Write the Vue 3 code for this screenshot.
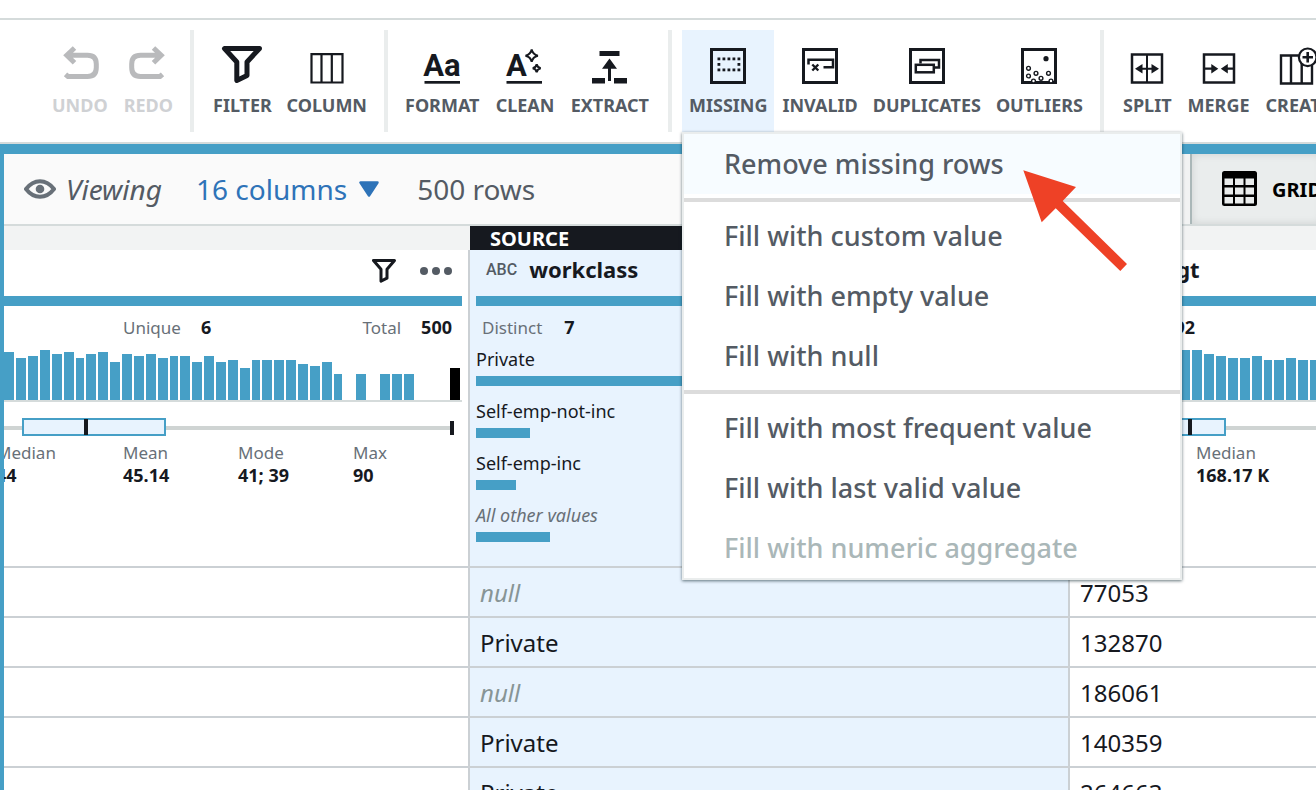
<script setup>
const frame = '<rect x="3.5" y="3.5" width="33" height="33" fill="none" stroke="#16191f" stroke-width="3"/>'
const smallFrame = '<rect x="5" y="8.5" width="30" height="28" fill="none" stroke="#16191f" stroke-width="2.5"/>'
const letter = 'font-family="Roboto, Liberation Sans, sans-serif" font-weight="700" fill="#16191f"'
const undoPath = 'M15.5 2 7.8 9.2 15.5 16.800M9 9.2H28.500Q37.300 9.200 37.300 18V21.500Q37.300 30.500 28.500 30.500H9L6.500 28.300'

const dots = [
  [11, 13], [16, 13], [21, 13], [26, 13], [31, 13],
  [11, 18.5], [31, 18.5],
  [11, 24], [16, 24], [21, 24], [26, 24], [31, 24]
].map(([x, y]) => `<rect x="${x - 1.5}" y="${y - 1.5}" width="2.8" height="2.8"/>`).join('')

const rings = [
  [9.5, 22.3], [9.5, 30], [17, 27.3], [29.5, 27.3], [22, 32.3], [14.500, 35], [32, 35]
].map(([x, y]) => `<circle cx="${x}" cy="${y}" r="1.9" fill="#fff" stroke="#16191f" stroke-width="1.400"/>`).join('')

const groups = [
  {
    name: 'history',
    tools: [
      { label: 'UNDO', disabled: true, icon: `<path d="${undoPath}" transform="translate(-1)" fill="none" stroke="#b9babc" stroke-width="5"/>` },
      { label: 'REDO', disabled: true, icon: `<path d="${undoPath}" transform="matrix(-1 0 0 1 41 0)" fill="none" stroke="#b9babc" stroke-width="5"/>` }
    ]
  },
  {
    name: 'view',
    tools: [
      { label: 'FILTER', icon: '<path d="M2.500 2.500H37.500L25 16V29.500L14.800 34.500V16Z" fill="none" stroke="#16191f" stroke-width="5" stroke-linejoin="round"/>' },
      { label: 'COLUMN', icon: '<path d="M4.500 8.200H35.500V36.500H4.500ZM14.500 8V36M24.800 8V36" fill="none" stroke="#16191f" stroke-width="2.200"/>' }
    ]
  },
  {
    name: 'text',
    tools: [
      { label: 'FORMAT', icon: `<text x="20" y="30" font-size="31" text-anchor="middle" ${letter}>Aa</text><rect x="2.500" y="35" width="35.500" height="2.700"/>` },
      { label: 'CLEAN', icon: `<text x="1" y="30" font-size="31" ${letter}>A</text><rect x="1.500" y="35" width="35.500" height="2.700"/><path d="M27.700 3.500Q28.800 8.600 33.900 9.700 28.800 10.800 27.700 15.900 26.600 10.800 21.500 9.700 26.600 8.600 27.700 3.500ZM32.700 18.300Q33.400 21.600 36.700 22.300 33.400 23 32.700 26.300 32 23 28.700 22.300 32 21.600 32.700 18.300Z" transform="translate(-1)" fill="#fff" stroke="#16191f" stroke-width="2"/>` },
      { label: 'EXTRACT', icon: '<path d="M9.500 5H29.500V10H9.500ZM19.500 12.500 27 22.700H21V35H18V22.700H12ZM2 32H15V37.500H2ZM24 32H37V37.500H24Z"/>' }
    ]
  },
  {
    name: 'quality',
    tools: [
      { label: 'MISSING', active: true, icon: frame + dots },
      { label: 'INVALID', icon: frame + '<path d="M8.500 18.500V13.700H33V21.300H23.500" fill="none" stroke="#16191f" stroke-width="2.500"/><path d="M12.300 18.500 18.300 24.500M18.300 18.500 12.300 24.500" stroke="#16191f" stroke-width="2.400"/>' },
      { label: 'DUPLICATES', icon: frame + '<path d="M13.500 17.500V14H32V21.500H28" fill="none" stroke="#16191f" stroke-width="2.500"/><rect x="8.800" y="18.800" width="18" height="7.500" fill="none" stroke="#16191f" stroke-width="2.500"/>' },
      { label: 'OUTLIERS', icon: frame + '<circle cx="27" cy="12.700" r="2.600"/>' + rings }
    ]
  },
  {
    name: 'structure',
    tools: [
      { label: 'SPLIT', icon: smallFrame + '<path d="M20 8V36M12 22.700H28" stroke="#16191f" stroke-width="2"/><path d="M8 22.700 15.500 18V27.400ZM32 22.700 24.500 18V27.400Z"/>' },
      { label: 'MERGE', icon: smallFrame + '<path d="M6 22.700H13M27 22.700H34" stroke="#16191f" stroke-width="2.200"/><path d="M19.300 22.700 12.300 18V27.400ZM21.800 22.700 28.800 18V27.400Z"/>' },
      { label: 'CREATE', icon: '<g transform="translate(5)"><path d="M-2 9.500H29V37.500H-2ZM8 9.500V37.500M18.700 9.500V37.500" fill="none" stroke="#16191f" stroke-width="2.400"/><circle cx="24.700" cy="11.300" r="8.800" fill="#fff" stroke="#16191f" stroke-width="2.200"/><path d="M19.500 11.300H30M24.700 6V16.600" stroke="#16191f" stroke-width="2.600"/></g>' }
    ]
  }
]

const menu = [
  [{ label: 'Remove missing rows', hover: true }],
  [{ label: 'Fill with custom value' }, { label: 'Fill with empty value' }, { label: 'Fill with null' }],
  [{ label: 'Fill with most frequent value' }, { label: 'Fill with last valid value' }, { label: 'Fill with numeric aggregate', disabled: true }]
]

// Histogram bars as [x, width, height]
const ageBars = [
  [0, 10, 48], [12, 10, 42], [24, 10, 44], [36, 10, 50], [48, 10, 46], [60, 10, 48], [72, 8, 42], [82, 10, 46],
  [94, 10, 48], [106, 10, 38], [118, 10, 46], [130, 10, 44], [142, 10, 46], [154, 10, 42], [166, 8, 44], [176, 10, 44],
  [188, 10, 38], [200, 10, 44], [212, 10, 38], [224, 10, 40], [236, 10, 32], [248, 8, 40], [258, 10, 40], [270, 10, 40],
  [282, 10, 40], [294, 10, 36], [306, 10, 34], [318, 10, 38], [330, 8, 26], [352, 10, 26], [376, 10, 26], [388, 10, 26], [400, 10, 26]
]
const weightBars = [
  [100, 10, 50], [112, 10, 50], [124, 8, 50], [134, 10, 50], [146, 10, 46], [158, 10, 44], [170, 10, 42], [182, 10, 42],
  [194, 10, 44], [206, 8, 40], [216, 10, 40], [228, 10, 42], [240, 10, 40], [252, 10, 40]
]

const ageStats = [
  { label: 'Median', value: '44' },
  { label: 'Mean', value: '45.14' },
  { label: 'Mode', value: '41; 39' },
  { label: 'Max', value: '90' }
]

const shares = [
  { label: 'Private', width: 586 },
  { label: 'Self-emp-not-inc', width: 54 },
  { label: 'Self-emp-inc', width: 40 },
  { label: 'All other values', width: 74, other: true }
]

const rows = [
  { workclass: null, weight: '77053' },
  { workclass: 'Private', weight: '132870' },
  { workclass: null, weight: '186061' },
  { workclass: 'Private', weight: '140359' },
  { workclass: 'Private', weight: '264663' }
]
</script>

<template>
  <div class="page">
    <nav class="toolbar" aria-label="Transformations">
      <div v-for="group in groups" :key="group.name" class="group" :class="group.name">
        <div v-for="tool in group.tools" :key="tool.label" class="slot">
          <button type="button" class="tool" :class="{ active: tool.active }" :disabled="tool.disabled">
            <svg class="tool-icon" viewBox="0 0 40 40" fill="#16191f" aria-hidden="true"><g v-html="tool.icon"></g></svg>
            <span>{{ tool.label }}</span>
          </button>
          <div v-if="tool.active" class="menu">
            <div v-for="(section, i) in menu" :key="i" class="section">
              <button
                v-for="item in section"
                :key="item.label"
                type="button"
                class="item"
                :class="{ hover: item.hover }"
                :disabled="item.disabled"
              >{{ item.label }}</button>
            </div>
            <svg class="pointer" viewBox="0 0 106 102" aria-hidden="true">
              <path d="M1.300 .300 54 17 40.700 31 105 94 98.300 101 33.700 38.300 19.700 52.300Z" fill="#ee4126" />
            </svg>
          </div>
        </div>
      </div>
    </nav>

    <main class="workspace">
      <div class="viewbar">
        <svg class="eye" viewBox="0 0 32 20" aria-hidden="true">
          <path d="M2 10Q8 2.200 16 2.200T30 10Q24 17.800 16 17.800T2 10Z" fill="none" stroke="#687078" stroke-width="4" stroke-linejoin="round" />
          <circle cx="16" cy="10" r="4.300" fill="#687078" />
        </svg>
        <em class="viewing">Viewing</em>
        <button type="button" class="columns">
          16 columns
          <svg class="caret" viewBox="0 0 20 16" aria-hidden="true"><path d="M1.500 1.500H18.500L10 14.500Z" fill="#2e73b8" stroke="#2e73b8" stroke-width="2.500" stroke-linejoin="round" /></svg>
        </button>
        <span class="count">500 rows</span>
        <div class="tabs">
          <button type="button" class="tab">
            <svg class="grid-icon" viewBox="0 0 36 36" aria-hidden="true">
              <rect width="35" height="35" rx="2.500" />
              <path d="M2.500 7.500H11V14H2.500ZM13 7.500H21.500V14H13ZM23.500 7.500H32V14H23.500ZM2.500 16.500H11V23.500H2.500ZM13 16.500H21.500V23.500H13ZM23.500 16.500H32V23.500H23.500ZM2.500 26H11V32.500H2.500ZM13 26H21.500V32.500H13ZM23.500 26H32V32.500H23.500Z" fill="#eaeded" />
            </svg>
            GRID
          </button>
        </div>
      </div>

      <table class="data">
        <colgroup>
          <col class="col-age">
          <col class="col-class">
          <col>
        </colgroup>
        <thead>
          <tr class="strip">
            <td></td>
            <td class="source">SOURCE</td>
            <td></td>
          </tr>
          <tr class="profiles">
            <th scope="col" class="age">
              <div class="title actions">
                <svg class="funnel" viewBox="0 0 40 40" aria-hidden="true"><path d="M2.500 2.500H37.500L25 17V32L15 37V17Z" fill="none" stroke="#16191f" stroke-width="5" stroke-linejoin="round" /></svg>
                <svg class="more" viewBox="0 0 32 8" fill="#545b64" aria-hidden="true"><circle cx="4" cy="4" r="4" /><circle cx="16" cy="4" r="4" /><circle cx="28" cy="4" r="4" /></svg>
              </div>
              <div class="quality-bar"></div>
              <div class="summary">
                <span>Unique</span><b>6</b>
                <span class="total">Total</span><b>500</b>
              </div>
              <svg class="chart" width="464" height="90" aria-hidden="true">
                <rect v-for="b in ageBars" :key="b[0]" :x="b[0]" :y="50 - b[2]" :width="b[1]" :height="b[2]" fill="#469fc6" />
                <rect x="446" y="18" width="10" height="32" />
                <rect y="50" width="458" height="2" fill="#d5dbdb" />
                <rect y="76" width="446" height="4" fill="#cfd4d3" />
                <rect x="19" y="69" width="142" height="16" fill="#e8f3fe" stroke="#469fc6" stroke-width="2" />
                <rect x="80" y="69" width="4" height="16" fill="#16191f" />
                <rect x="446" y="71" width="4" height="14" fill="#16191f" />
              </svg>
              <dl class="stats">
                <div v-for="s in ageStats" :key="s.label"><dt>{{ s.label }}</dt><dd>{{ s.value }}</dd></div>
              </dl>
            </th>
            <th scope="col" class="class">
              <div class="title"><span class="type">ABC</span>workclass</div>
              <div class="quality-bar"></div>
              <div class="summary"><span>Distinct</span><b>7</b></div>
              <div class="shares">
                <div v-for="s in shares" :key="s.label" class="share" :class="{ other: s.other }">
                  {{ s.label }}
                  <div class="share-bar" :style="{ width: s.width + 'px' }"></div>
                </div>
              </div>
            </th>
            <th scope="col" class="weight">
              <div class="title"><span class="type">#</span>fnlwgt</div>
              <div class="quality-bar"></div>
              <div class="summary"><span>Distinct</span><b>492</b></div>
              <svg class="chart" height="90" aria-hidden="true">
                <rect v-for="b in weightBars" :key="b[0]" :x="b[0] - 12" :y="50 - b[2]" :width="b[1]" :height="b[2]" fill="#469fc6" />
                <rect y="50" width="100%" height="2" fill="#d5dbdb" />
                <rect y="76" width="100%" height="4" fill="#cfd4d3" />
                <rect x="51" y="69" width="104" height="16" fill="#e8f3fe" stroke="#469fc6" stroke-width="2" />
                <rect x="118" y="69" width="4" height="16" fill="#16191f" />
              </svg>
              <dl class="stats"><div><dt>Median</dt><dd>168.17 K</dd></div></dl>
            </th>
          </tr>
        </thead>
        <tbody>
          <tr v-for="(row, i) in rows" :key="i">
            <td></td>
            <td class="class"><i v-if="row.workclass === null">null</i><template v-else>{{ row.workclass }}</template></td>
            <td>{{ row.weight }}</td>
          </tr>
        </tbody>
      </table>
    </main>
  </div>
</template>

<style>
body { margin: 0; }
</style>

<style scoped>
* { box-sizing: border-box; }

.page {
  display: flex;
  flex-direction: column;
  height: 100vh;
  overflow: hidden;
  padding-top: 18px;
  background: #fff;
  color: #16191f;
  font-family: "Noto Sans", "Open Sans", sans-serif;
}

button {
  margin: 0;
  padding: 0;
  border: 0;
  background: none;
  font: inherit;
  color: inherit;
}

svg { display: block; flex: none; }

.toolbar {
  display: flex;
  flex: none;
  padding: 10px 0;
  border-top: 2px solid #d5dbdb;
  border-bottom: 2px solid #d5dbdb;
}

.group {
  display: flex;
  flex: none;
  justify-content: space-between;
  height: 102px;
  padding: 0 10px;
  border-right: 4px solid #eaeded;
}
.group.history { width: 194px; padding-left: 45px; }
.group.view { width: 194px; padding-left: 12px; }
.group.text { width: 284px; padding-right: 12px; }
.group.quality { width: 432px; }
.group.structure { gap: 2px; padding-left: 12px; border-right: 0; }

.slot { position: relative; }

.tool {
  display: flex;
  flex-direction: column;
  align-items: center;
  gap: 7px;
  height: 102px;
  padding: 16px 7px 0;
  font-size: 18px;
  font-weight: 700;
  line-height: 24px;
  color: #545b64;
}
.tool:disabled { color: #cfd1d4; }
.tool.active { background: #e8f3fe; }

.tool-icon { width: 40px; height: 40px; overflow: visible; }

.menu {
  position: absolute;
  z-index: 2;
  top: 100%;
  left: 0;
  width: 500px;
  border: 2px solid #eaeded;
  background: #fff;
  box-shadow: 0 1px 3px rgba(0, 28, 36, 0.6);
}

.section + .section {
  margin-top: 4px;
  padding-top: 4px;
  border-top: 4px solid #dcdcdc;
}

.item {
  display: block;
  width: 100%;
  height: 60px;
  padding: 0 40px 2px;
  font-size: 27px;
  font-weight: 500;
  text-align: left;
  color: #545b64;
}
.item.hover { background: #f7fcff; }
.item:disabled { color: #aab7b8; }

.pointer {
  position: absolute;
  top: 36px;
  left: 338px;
  width: 106px;
  height: 102px;
}

.workspace {
  flex: 1;
  min-height: 0;
  overflow: hidden;
  border-top: 10px solid #469fc6;
  border-left: 4px solid #469fc6;
}

.viewbar {
  display: flex;
  align-items: center;
  height: 72px;
  padding-left: 20px;
  border-bottom: 2px solid #d5dbdb;
  background: #fafafa;
  font-size: 28px;
  color: #545b64;
}

.eye { width: 32px; height: 20px; margin-right: 10px; }

.viewing { width: 130px; }

.columns {
  display: flex;
  align-items: center;
  gap: 12px;
  margin-right: 38px;
  color: #2e73b8;
}

.caret { width: 20px; height: 16px; }

.tabs {
  display: flex;
  flex: none;
  align-self: stretch;
  width: 134px;
  margin-left: auto;
  padding-left: 8px;
  background: #f2f3f3;
  white-space: nowrap;
}

.tab {
  display: flex;
  flex: 1;
  align-items: center;
  gap: 14px;
  padding-left: 30px;
  border-left: 2px solid #aab7b8;
  background: #eaeded;
  box-shadow: inset 0 0 8px rgba(0, 0, 0, 0.12);
  font-size: 20px;
  font-weight: 700;
  color: #000;
}

.grid-icon { width: 36px; height: 36px; }

.data {
  width: 100%;
  border-collapse: separate;
  border-spacing: 0;
  table-layout: fixed;
}

.col-age { width: 466px; }
.col-class { width: 600px; }

.strip td {
  height: 24px;
  padding: 0;
  background: #f2f3f3;
}
.strip .source {
  padding: 2px 0 0 20px;
  background: #16191f;
  font-size: 20px;
  font-weight: 700;
  line-height: 22px;
  color: #fff;
}

th, tbody td {
  overflow: hidden;
  border-right: 2px solid #cbd0d4;
  border-bottom: 2px solid #cbd0d4;
}
th:last-child, tbody td:last-child { border-right: 0; }

th {
  height: 318px;
  padding: 0;
  vertical-align: top;
  text-align: left;
  font-weight: 400;
}

.class { background: #e8f3fe; }

.title {
  display: flex;
  align-items: center;
  height: 46px;
  padding: 0 16px 8px;
  font-size: 22px;
  font-weight: 700;
}
.title.actions {
  justify-content: flex-end;
  gap: 24px;
  padding: 0 16px 4px 0;
}

.type {
  min-width: 30px;
  margin-right: 12px;
  font-family: Roboto, "Liberation Sans", sans-serif;
  font-size: 16px;
  font-weight: 500;
  color: #545b64;
}

.funnel { width: 24px; height: 24px; }
.more { width: 32px; height: 8px; }

.quality-bar { height: 10px; background: #469fc6; }
.age .quality-bar { margin-right: 6px; }
.class .quality-bar, .weight .quality-bar { margin-left: 6px; }

.summary {
  display: flex;
  align-items: center;
  gap: 22px;
  height: 43px;
  padding: 0 12px 1px;
  font-size: 18px;
}
.age .summary { gap: 20px; padding: 0 16px 1px 119px; }
.summary span, dt { font-size: 17px; color: #687078; }
.summary .total { margin-left: auto; }

.chart { margin: 1px 0 2px; }
.weight .chart { width: 100%; }

.stats {
  display: flex;
  margin: 0;
  line-height: 22px;
}
.age .stats { margin-left: -8px; }
.age .stats div { width: 115px; }
.age .stats div:first-child { width: 127px; }
.weight .stats { padding-left: 126px; }
dd { margin: 0; font-size: 18px; font-weight: 700; }

.share {
  margin: 0 6px 15px;
  font-size: 18px;
  line-height: 20px;
}
.share.other { font-style: italic; color: #687078; }
.share-bar { height: 10px; margin-top: 7px; background: #469fc6; }

tbody td {
  height: 50px;
  padding: 2px 10px 0;
  font-size: 24px;
  line-height: 30px;
}
tbody i { color: #879596; }
</style>
